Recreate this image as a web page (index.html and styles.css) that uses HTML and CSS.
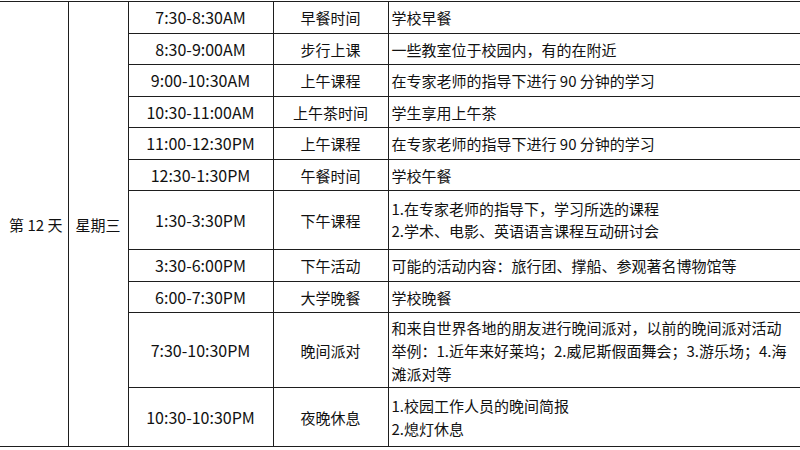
FILE: index.html
```html
<!DOCTYPE html>
<html lang="zh-CN">
<head>
<meta charset="utf-8">
<title>第 12 天 行程</title>
<link rel="stylesheet" href="styles.css">
</head>
<body>
<table class="schedule">
  <colgroup>
    <col class="c-day">
    <col class="c-week">
    <col class="c-time">
    <col class="c-act">
    <col class="c-desc">
  </colgroup>
  <tbody>
    <tr class="r1">
      <td class="day" rowspan="11">第 12 天</td>
      <td class="week" rowspan="11">星期三</td>
      <td class="time">7:30-8:30AM</td>
      <td class="act">早餐时间</td>
      <td class="desc">学校早餐</td>
    </tr>
    <tr class="r1">
      <td class="time">8:30-9:00AM</td>
      <td class="act">步行上课</td>
      <td class="desc">一些教室位于校园内，有的在附近</td>
    </tr>
    <tr class="r1">
      <td class="time">9:00-10:30AM</td>
      <td class="act">上午课程</td>
      <td class="desc">在专家老师的指导下进行 90 分钟的学习</td>
    </tr>
    <tr class="r1b">
      <td class="time">10:30-11:00AM</td>
      <td class="act">上午茶时间</td>
      <td class="desc">学生享用上午茶</td>
    </tr>
    <tr class="r1">
      <td class="time">11:00-12:30PM</td>
      <td class="act">上午课程</td>
      <td class="desc">在专家老师的指导下进行 90 分钟的学习</td>
    </tr>
    <tr class="r1">
      <td class="time">12:30-1:30PM</td>
      <td class="act">午餐时间</td>
      <td class="desc">学校午餐</td>
    </tr>
    <tr class="r2">
      <td class="time">1:30-3:30PM</td>
      <td class="act">下午课程</td>
      <td class="desc tight">1.在专家老师的指导下，学习所选的课程<br>2.学术、电影、英语语言课程互动研讨会</td>
    </tr>
    <tr class="r1">
      <td class="time">3:30-6:00PM</td>
      <td class="act">下午活动</td>
      <td class="desc">可能的活动内容：旅行团、撑船、参观著名博物馆等</td>
    </tr>
    <tr class="r1b">
      <td class="time">6:00-7:30PM</td>
      <td class="act">大学晚餐</td>
      <td class="desc">学校晚餐</td>
    </tr>
    <tr class="r3">
      <td class="time">7:30-10:30PM</td>
      <td class="act">晚间派对</td>
      <td class="desc">和来自世界各地的朋友进行晚间派对，以前的晚间派对活动<br>举例：1.近年来好莱坞；2.威尼斯假面舞会；3.游乐场；4.海<br>滩派对等</td>
    </tr>
    <tr class="r2">
      <td class="time">10:30-10:30PM</td>
      <td class="act">夜晚休息</td>
      <td class="desc">1.校园工作人员的晚间简报<br>2.熄灯休息</td>
    </tr>
  </tbody>
</table>
</body>
</html>
```

FILE: styles.css
```css
html, body {
  margin: 0;
  padding: 0;
  background: #ffffff;
  overflow: hidden;
}

body {
  width: 800px;
  height: 450px;
  padding-top: 1px;
  box-sizing: border-box;
  font-family: "Noto Sans CJK SC", "Noto Sans", sans-serif;
  font-size: 15px;
  color: #111111;
}

.schedule {
  border-collapse: collapse;
  table-layout: fixed;
  width: 820px;
}

.c-day { width: 68px; }
.c-week { width: 60px; }
.c-time { width: 145px; }
.c-act { width: 115px; }
.c-desc { width: 432px; }

.schedule td {
  border: 1px solid #1e1e1e;
  padding: 0 3px;
  line-height: 23px;
  vertical-align: middle;
  white-space: nowrap;
  overflow: hidden;
}

.schedule td.day {
  border-left: none;
  text-align: center;
  padding: 0 2px 0 6px;
}

.schedule td.week,
.schedule td.act {
  text-align: center;
}

.schedule td.time {
  text-align: center;
  font-size: 16px;
}

.schedule td.desc {
  text-align: left;
  padding-left: 3px;
}

.schedule td.tight {
  line-height: 22px;
}

.r1 { height: 31.7px; }
.r1b { height: 31px; }
.r2 { height: 59px; }
.r3 { height: 75px; }
```
